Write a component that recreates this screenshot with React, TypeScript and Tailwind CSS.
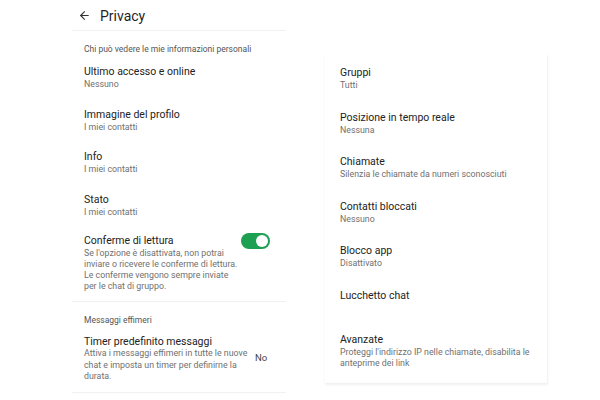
import React from "react";
import { ArrowLeft } from "lucide-react";

function Row({ title, sub }: { title: string; sub?: string }) {
  return (
    <div className="flex h-[42.5px] flex-col pt-[9px]">
      <div className="text-[10.5px] leading-[13px] text-[#222]">{title}</div>
      {sub && <div className="text-[8.8px] leading-[12px] text-[#707070]">{sub}</div>}
    </div>
  );
}

function RRow({ title, sub }: { title: string; sub?: string }) {
  return (
    <div className="flex h-[44.5px] flex-col pt-[8px]">
      <div className="text-[10.5px] leading-[13px] text-[#222]">{title}</div>
      {sub && <div className="text-[8.8px] leading-[12px] text-[#707070]">{sub}</div>}
    </div>
  );
}

export default function App() {
  return (
    <div
      className="flex h-[400px] w-[600px] overflow-hidden bg-white"
      style={{ fontFamily: "Roboto, 'Noto Sans', sans-serif" }}
    >
      {/* Left screenshot */}
      <div className="ml-[72px] flex w-[214px] flex-col">
        <div className="flex h-[31px] items-center border-b border-[#f1f1f1] pt-[1px]">
          <ArrowLeft size={13} strokeWidth={2} className="ml-[6px] text-[#333]" />
          <span className="ml-[9px] text-[14px] leading-[18px] text-[#1f1f1f]">Privacy</span>
        </div>
        <div className="flex flex-col pl-[12px]">
          <div className="pt-[12px] text-[8.5px] leading-[12px] text-[#555]">
            Chi può vedere le mie informazioni personali
          </div>
          <div className="h-[1px]" />
          <Row title="Ultimo accesso e online" sub="Nessuno" />
          <Row title="Immagine del profilo" sub="I miei contatti" />
          <Row title="Info" sub="I miei contatti" />
          <Row title="Stato" sub="I miei contatti" />
          <div className="flex items-start pt-[8px] pb-[9px]">
            <div className="flex w-[157px] flex-col">
              <div className="text-[10.5px] leading-[13px] text-[#222]">Conferme di lettura</div>
              <div className="mt-[1px] text-[8.8px] leading-[11px] text-[#707070]">
                Se l'opzione è disattivata, non potrai inviare o ricevere le conferme di lettura. Le
                conferme vengono sempre inviate per le chat di gruppo.
              </div>
            </div>
            <div className="ml-[0px] mt-[-1px] flex h-[16px] w-[29px] items-center justify-end rounded-full bg-[#1ea052] pr-[2px]">
              <div className="h-[12px] w-[12px] rounded-full bg-white" />
            </div>
          </div>
        </div>
        <div className="border-b border-[#f1f1f1]" />
        <div className="flex flex-col pl-[12px]">
          <div className="pt-[12px] text-[8.5px] leading-[12px] text-[#555]">Messaggi effimeri</div>
          <div className="flex items-start pt-[9px] pb-[9px]">
            <div className="flex w-[168px] flex-col">
              <div className="text-[10.5px] leading-[13px] text-[#222]">Timer predefinito messaggi</div>
              <div className="text-[8.8px] leading-[11.5px] text-[#707070]">
                Attiva i messaggi effimeri in tutte le nuove chat e imposta un timer per definirne la
                durata.
              </div>
            </div>
            <div className="ml-[3px] mt-[17px] text-[9.5px] leading-[12px] text-[#444]">No</div>
          </div>
        </div>
        <div className="border-b border-[#f1f1f1]" />
      </div>

      {/* Right screenshot */}
      <div className="ml-[39px] mt-[55px] flex h-[328px] w-[223px] flex-col border-r border-[#f4f4f4] pl-[15px] shadow-[0_2px_2px_rgba(0,0,0,0.06)]">
        <div className="h-[3px]" />
        <RRow title="Gruppi" sub="Tutti" />
        <RRow title="Posizione in tempo reale" sub="Nessuna" />
        <RRow title="Chiamate" sub="Silenzia le chiamate da numeri sconosciuti" />
        <RRow title="Contatti bloccati" sub="Nessuno" />
        <RRow title="Blocco app" sub="Disattivato" />
        <RRow title="Lucchetto chat" />
        <div className="flex flex-col pt-[8px]">
          <div className="text-[10.5px] leading-[13px] text-[#222]">Avanzate</div>
          <div className="mt-[1px] pr-[10px] text-[8.8px] leading-[11px] text-[#707070]">
            Proteggi l'indirizzo IP nelle chiamate, disabilita le anteprime dei link
          </div>
        </div>
      </div>
    </div>
  );
}
